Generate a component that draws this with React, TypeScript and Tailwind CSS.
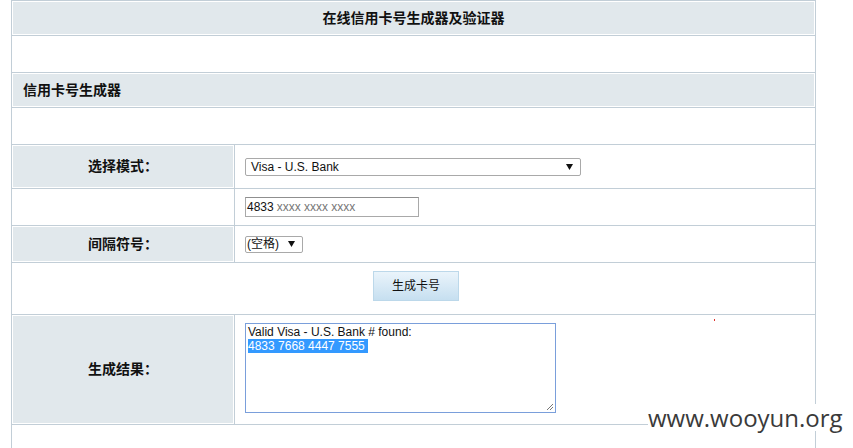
import React from 'react';

const line = 'border-[#c2ced7]';

const Label = ({ text, gray = true }: { text: string; gray?: boolean }) => (
  <div
    className={`w-[223px] shrink-0 border-r ${line} ${gray ? 'border-l border-l-white' : ''} flex`}
  >
    <div
      className={`flex-1 flex items-center justify-center text-[14px] font-bold text-[#111] ${
        gray ? 'bg-[#e1e8ec] border-y border-r border-white' : ''
      }`}
    >
      {text}
    </div>
  </div>
);

const Arrow = () => (
  <svg width="7" height="6" viewBox="0 0 7 6" className="shrink-0">
    <path d="M0 0 H7 L3.5 6 Z" fill="#111" />
  </svg>
);

const App = () => {
  return (
    <div
      className="relative h-[448px] w-[853px] overflow-hidden bg-white text-[12px] text-[#111]"
      style={{ fontFamily: '"Liberation Sans", "Noto Sans CJK SC", sans-serif' }}
    >
      <div className={`ml-[11px] w-[805px] h-[470px] border-x border-t ${line} flex flex-col`}>
        {/* title */}
        <div className={`h-[35px] shrink-0 border-b ${line} flex`}>
          <div className="flex-1 border border-white bg-[#e1e8ec] flex items-center justify-center text-[14px] font-bold">
            在线信用卡号生成器及验证器
          </div>
        </div>
        <div className={`h-[37px] shrink-0 border-b ${line}`} />

        {/* section heading */}
        <div className={`h-[35px] shrink-0 border-b ${line} flex`}>
          <div className="flex-1 border border-white bg-[#e1e8ec] flex items-center pl-[10px] text-[14px] font-bold">
            信用卡号生成器
          </div>
        </div>
        <div className={`h-[37px] shrink-0 border-b ${line}`} />

        {/* mode */}
        <div className={`h-[44px] shrink-0 border-b ${line} flex`}>
          <Label text="选择模式：" />
          <div className="flex-1 flex items-center pl-[10px]">
            <div className="w-[336px] h-[18px] border border-[#a9a9a9] rounded-[2px] flex items-center justify-between pl-[5px] pr-[7px] bg-white">
              <span>Visa - U.S. Bank</span>
              <Arrow />
            </div>
          </div>
        </div>

        {/* pattern */}
        <div className={`h-[37px] shrink-0 border-b ${line} flex`}>
          <Label text="" gray={false} />
          <div className="flex-1 flex items-center pl-[10px]">
            <div className="w-[174px] h-[20px] border border-[#a9a9a9] border-t-[#8f8f8f] flex items-center pl-[1px] bg-white">
              <span>4833</span>
              <span className="text-[#777] ml-[3px]">xxxx xxxx xxxx</span>
            </div>
          </div>
        </div>

        {/* separator */}
        <div className={`h-[37px] shrink-0 border-b ${line} flex`}>
          <Label text="间隔符号：" />
          <div className="flex-1 flex items-center pl-[10px]">
            <div className="w-[58px] h-[17px] border border-[#a9a9a9] rounded-[2px] flex items-center justify-between pl-[1px] pr-[7px] bg-white">
              <span>(空格)</span>
              <Arrow />
            </div>
          </div>
        </div>

        {/* button */}
        <div className={`h-[52px] shrink-0 border-b ${line} flex justify-center items-start pt-[8px] pl-[5px]`}>
          <button className="w-[86px] h-[30px] border border-[#bcd8ea] bg-gradient-to-b from-[#eaf4fb] to-[#c6dff0] text-[12px] text-[#111]">
            生成卡号
          </button>
        </div>

        {/* result */}
        <div className={`h-[110px] shrink-0 border-b ${line} flex`}>
          <Label text="生成结果：" />
          <div className="flex-1 flex items-start pl-[10px] pt-[8px]">
            <div className="relative w-[311px] h-[90px] border border-[#7a9fdb] bg-white pl-[2px] pt-[1px] leading-[14px]">
              <div>Valid Visa - U.S. Bank # found:</div>
              <div>
                <span className="bg-[#3399ff] text-white pr-[3px]">4833 7668 4447 7555</span>
              </div>
              <svg width="8" height="8" viewBox="0 0 8 8" className="absolute right-[1px] bottom-[1px]">
                <path d="M7 1 L1 7 M7 4 L4 7" stroke="#777" strokeWidth="1" />
              </svg>
            </div>
          </div>
        </div>
        <div className="flex-1" />
      </div>

      <span className="absolute left-[714px] top-[319px] w-[1px] h-[2px] bg-[#e0302a]" />
      <span
        className="absolute left-[648px] top-[404px] leading-[27px] text-[24px] text-[#3a3a3a] bg-white"
        style={{ fontFamily: '"Open Sans", sans-serif' }}
      >
        www.wooyun.org
      </span>
    </div>
  );
};

export default App;
